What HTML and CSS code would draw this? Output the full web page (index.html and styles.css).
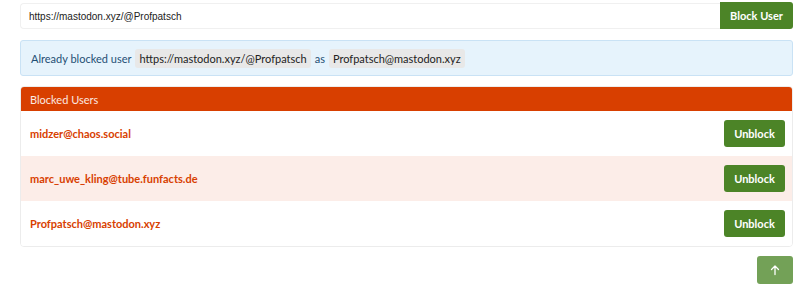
FILE: index.html
```html
<!DOCTYPE html>
<html>
<head>
<meta charset="utf-8">
<link rel="stylesheet" href="styles.css">
</head>
<body>
<div class="page">
  <form class="block-form">
    <input class="url-input" type="text" value="https://mastodon.xyz/@Profpatsch">
    <button class="btn btn-block" type="button">Block User</button>
  </form>
  <div class="alert">
    Already blocked user <code class="pill">https://mastodon.xyz/@Profpatsch</code> as <code class="pill">Profpatsch@mastodon.xyz</code>
  </div>
  <div class="card">
    <div class="card-header">Blocked Users</div>
    <div class="row">
      <span class="user">midzer@chaos.social</span>
      <button class="btn btn-unblock" type="button">Unblock</button>
    </div>
    <div class="row row-alt">
      <span class="user">marc_uwe_kling@tube.funfacts.de</span>
      <button class="btn btn-unblock" type="button">Unblock</button>
    </div>
    <div class="row">
      <span class="user">Profpatsch@mastodon.xyz</span>
      <button class="btn btn-unblock" type="button">Unblock</button>
    </div>
  </div>
  <div class="footer">
    <button class="btn btn-top" type="button" aria-label="Back to top">
      <svg width="12" height="12" viewBox="0 0 12 12"><path d="M6 10.5V2M2.5 5.5L6 2l3.5 3.5" fill="none" stroke="#fff" stroke-width="1.3" stroke-linecap="round" stroke-linejoin="round"/></svg>
    </button>
  </div>
</div>
</body>
</html>
```
FILE: styles.css
```css
* { box-sizing: border-box; }
body {
  margin: 0;
  background: #fff;
  font-family: Lato, "Open Sans", sans-serif;
  font-size: 11px;
  color: #333;
}
.page {
  padding: 2px 13px 0 20px;
}
.block-form {
  display: flex;
  margin: 0;
  height: 27px;
}
.url-input {
  flex: 1;
  height: 26px;
  margin-top: 1px;
  border: 1px solid #f0f0f0;
  border-right: none;
  border-radius: 4px 0 0 4px;
  padding: 0 8px;
  font-family: "Liberation Sans", Arial, sans-serif;
  font-size: 10px;
  color: #222;
  outline: none;
}
.btn {
  font-family: Lato, "Open Sans", sans-serif;
  font-weight: bold;
  font-size: 11px;
  color: #fff;
  background: #4c8427;
  border: none;
  border-radius: 3px;
  cursor: pointer;
}
.btn-block {
  width: 73px;
  height: 27px;
  border-radius: 0 3px 3px 0;
  padding: 0;
}
.alert {
  margin-top: 11px;
  height: 36px;
  display: flex;
  align-items: center;
  gap: 4px;
  padding: 0 10px;
  background: #e6f3fc;
  border: 1px solid #c9e2f5;
  border-radius: 3px;
  color: #1f4f74;
  font-size: 11px;
}
.pill {
  font-family: Lato, "Open Sans", sans-serif;
  font-size: 11px;
  background: #e8e8e8;
  color: #222;
  border-radius: 3px;
  padding: 3px 4px;
}
.card {
  margin-top: 10px;
  border: 1px solid #ececec;
  border-radius: 4px;
  overflow: hidden;
}
.card-header {
  height: 24px;
  background: #d83f00;
  color: #fbe9e2;
  padding: 0 9px;
  display: flex;
  align-items: center;
  font-size: 11px;
}
.row {
  height: 45px;
  display: flex;
  align-items: center;
  justify-content: space-between;
  padding: 0 7px 0 9px;
  background: #fff;
}
.row-alt {
  background: #fcede8;
}
.user {
  color: #d84000;
  font-weight: bold;
  font-size: 11px;
}
.btn-unblock {
  width: 61px;
  height: 27px;
  padding: 0;
}
.footer {
  display: flex;
  justify-content: flex-end;
  margin-top: 9px;
}
.btn-top {
  width: 36px;
  height: 28px;
  background: #73a157;
  display: flex;
  align-items: center;
  justify-content: center;
  padding: 0;
}
```
